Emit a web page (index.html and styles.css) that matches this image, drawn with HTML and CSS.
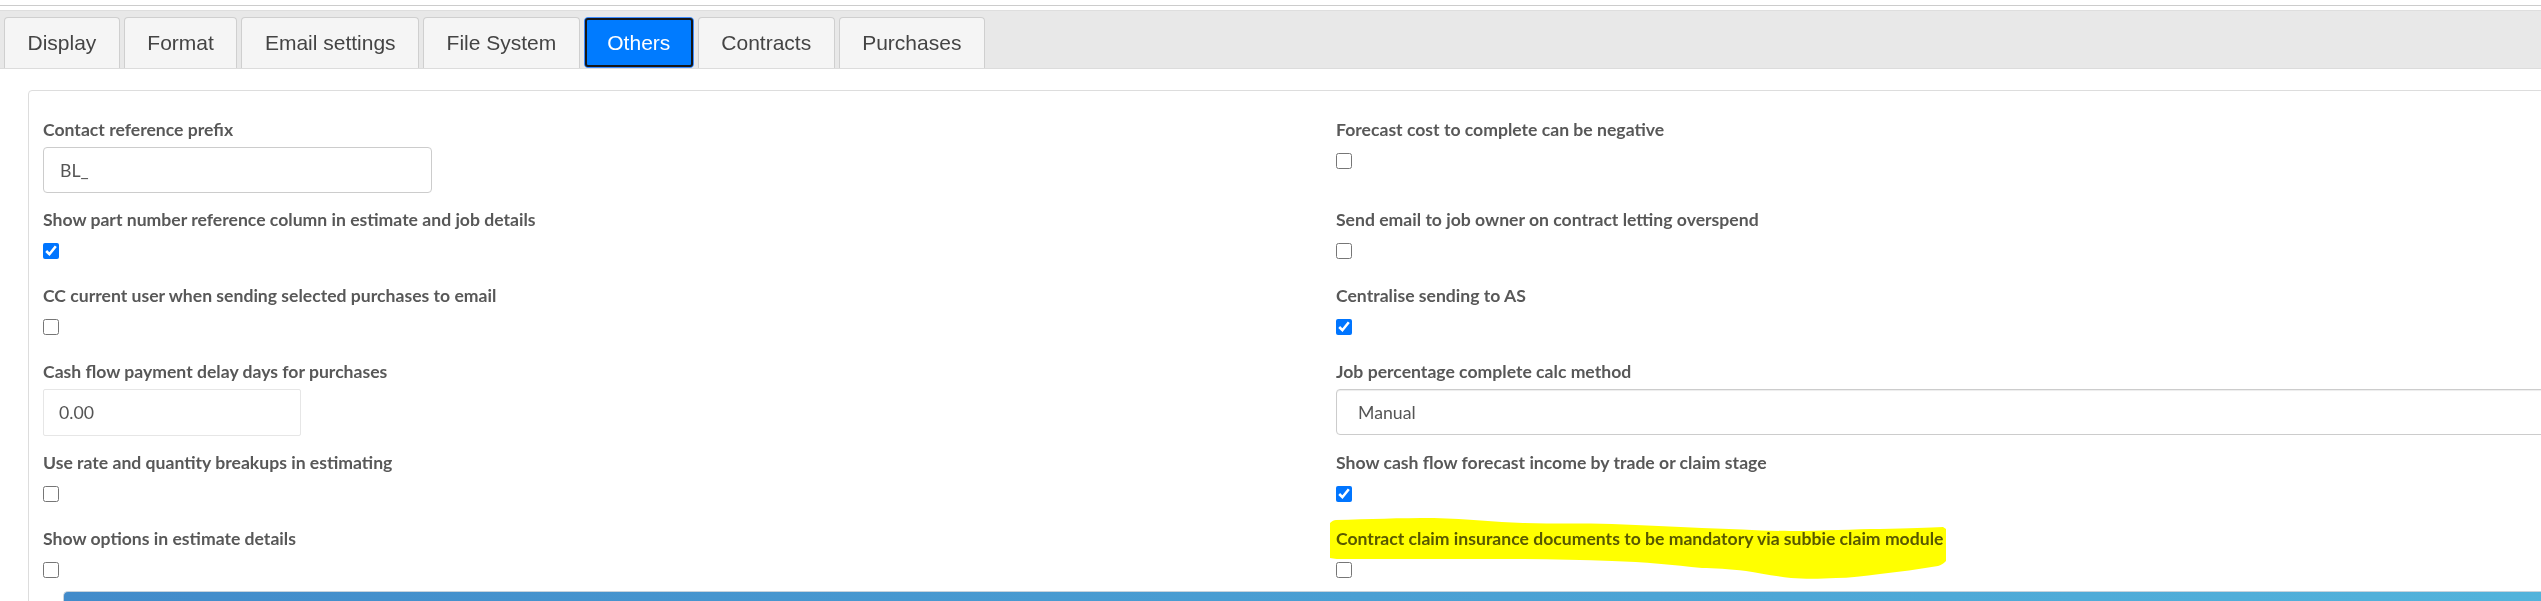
FILE: index.html
```html
<!DOCTYPE html>
<html lang="en">
<head>
<meta charset="utf-8">
<title>Settings - Others</title>
<link rel="stylesheet" href="styles.css">
</head>
<body>
<div class="topline"></div>
<nav class="tabbar">
  <div class="tab">Display</div>
  <div class="tab">Format</div>
  <div class="tab">Email settings</div>
  <div class="tab">File System</div>
  <div class="tab active">Others</div>
  <div class="tab">Contracts</div>
  <div class="tab">Purchases</div>
</nav>

<section class="card">
  <div class="rows">
    <div class="row">
      <div class="field">
        <label class="lbl">Contact reference prefix</label>
        <input class="txt txt-prefix" type="text" value="BL_">
      </div>
      <div class="field">
        <label class="lbl">Forecast cost to complete can be negative</label>
        <div class="chk"><input type="checkbox"></div>
      </div>
    </div>

    <div class="row">
      <div class="field">
        <label class="lbl">Show part number reference column in estimate and job details</label>
        <div class="chk"><input type="checkbox" checked></div>
      </div>
      <div class="field">
        <label class="lbl">Send email to job owner on contract letting overspend</label>
        <div class="chk"><input type="checkbox"></div>
      </div>
    </div>

    <div class="row">
      <div class="field">
        <label class="lbl">CC current user when sending selected purchases to email</label>
        <div class="chk"><input type="checkbox"></div>
      </div>
      <div class="field">
        <label class="lbl">Centralise sending to AS</label>
        <div class="chk"><input type="checkbox" checked></div>
      </div>
    </div>

    <div class="row">
      <div class="field">
        <label class="lbl">Cash flow payment delay days for purchases</label>
        <input class="txt txt-num" type="text" value="0.00">
      </div>
      <div class="field">
        <label class="lbl">Job percentage complete calc method</label>
        <select class="sel"><option>Manual</option></select>
      </div>
    </div>

    <div class="row">
      <div class="field">
        <label class="lbl">Use rate and quantity breakups in estimating</label>
        <div class="chk"><input type="checkbox"></div>
      </div>
      <div class="field">
        <label class="lbl">Show cash flow forecast income by trade or claim stage</label>
        <div class="chk"><input type="checkbox" checked></div>
      </div>
    </div>

    <div class="row">
      <div class="field">
        <label class="lbl">Show options in estimate details</label>
        <div class="chk"><input type="checkbox"></div>
      </div>
      <div class="field">
        <div class="hl-wrap">
          <label class="lbl">Contract claim insurance documents to be mandatory via subbie claim module</label>
          <svg class="hl" width="618" height="64" viewBox="0 0 618 64" aria-hidden="true">
            <path d="M1 6 C3 4 5 3 7 3 C40 2 70 1 105 1 C140 2 165 5 194 6 C225 7 255 6 283 7 C315 8 345 10 373 11 C405 12 435 14 462 14 C495 14 525 12 551 12 C580 11 600 11 614 10 L617 12 L617 44 C614 47 612 48 609 49 C590 52 570 55 551 57 C535 59 520 61 507 61 C490 62 475 62 462 61 C445 59 430 56 417 54 C400 52 385 51 373 51 C345 48 315 45 283 44 C255 43 225 42 194 42 C165 42 135 42 105 42 C75 42 45 42 16 42 C10 42 5 42 1 41 Z" fill="#ffff00"/>
          </svg>
        </div>
        <div class="chk"><input type="checkbox"></div>
      </div>
    </div>
  </div>
  <div class="panel-head"></div>
</section>
</body>
</html>
```
FILE: styles.css
```css
html, body {
  margin: 0;
  padding: 0;
  background: #fff;
  overflow: hidden;
}
body {
  width: 2541px;
  height: 601px;
  font-family: "Lato", "Open Sans", sans-serif;
}

.topline {
  margin-top: 5px;
  height: 1px;
  background: #cccccc;
}

.tabbar {
  margin-top: 4px;
  display: flex;
  align-items: flex-end;
  gap: 4px;
  padding: 6px 0 0 4px;
  height: 51px;
  background: #e8e8e8;
  border-top: 1px solid #dedede;
  border-bottom: 1px solid #dcdcdc;
}

.tab {
  height: 51px;
  box-sizing: border-box;
  padding: 0 22.5px;
  border: 1px solid #cfcfcf;
  border-bottom: none;
  border-radius: 4px 4px 0 0;
  background: #f5f5f5;
  color: #444;
  font-family: "Liberation Sans", Arial, sans-serif;
  font-size: 21px;
  line-height: 49px;
  white-space: nowrap;
}

.tab.active {
  background: #007bff;
  border: 1px solid #3d8bff;
  border-radius: 4px;
  color: #fff;
  outline: 2px solid #161616;
  outline-offset: -3px;
  height: 51px;
}

.card {
  margin: 21px 0 0 28px;
  width: 2620px;
  border: 1px solid #dddddd;
  border-radius: 4px;
  padding: 28px 0 0 14px;
  height: 600px;
}

.rows {
  display: flex;
  flex-direction: column;
  gap: 16px;
}

.row {
  display: grid;
  grid-template-columns: 1263px 1263px;
  column-gap: 30px;
  align-items: start;
}

.field {
  display: flex;
  flex-direction: column;
  align-items: flex-start;
}

.lbl {
  display: block;
  font-weight: 700;
  font-size: 17.6px;
  line-height: 22px;
  color: #585858;
  white-space: nowrap;
}

.txt {
  margin-top: 6px;
  box-sizing: border-box;
  height: 46px;
  font-family: "Lato", "Open Sans", sans-serif;
  font-size: 17.7px;
  color: #555;
  background: #fff;
  outline: none;
}

.txt-prefix {
  width: 389px;
  border: 1px solid #cccccc;
  border-radius: 4px;
  padding: 0 16px;
}

.txt-num {
  width: 258px;
  height: 47px;
  border: 1px solid #e6e6e6;
  border-radius: 2px;
  padding: 0 15px;
}

.sel {
  margin-top: 6px;
  box-sizing: border-box;
  width: 1263px;
  height: 46px;
  border: 1px solid #cccccc;
  border-radius: 4px;
  padding: 0 21px;
  background: #fff;
  box-shadow: inset 0 1px 1px rgba(0, 0, 0, 0.075);
  font-family: "Lato", "Open Sans", sans-serif;
  font-size: 17.7px;
  color: #555;
  appearance: none;
  -webkit-appearance: none;
  outline: none;
}

.chk {
  margin: 12px 0 10px;
  height: 16px;
  display: flex;
}

.chk input {
  margin: 0;
  width: 16px;
  height: 16px;
  accent-color: #0075ff;
}

.hl-wrap {
  position: relative;
}

.hl {
  position: absolute;
  left: -7px;
  top: -11px;
  mix-blend-mode: multiply;
  pointer-events: none;
}

.panel-head {
  margin: 3px 0 0 20px;
  height: 40px;
  border-top: 1px solid #c9d3dc;
  border-left: 1px solid #c9d3dc;
  border-radius: 5px 0 0 0;
  background: linear-gradient(to right, #428bca 0%, #4a9fd3 50%, #53b5dc 100%);
}
```
